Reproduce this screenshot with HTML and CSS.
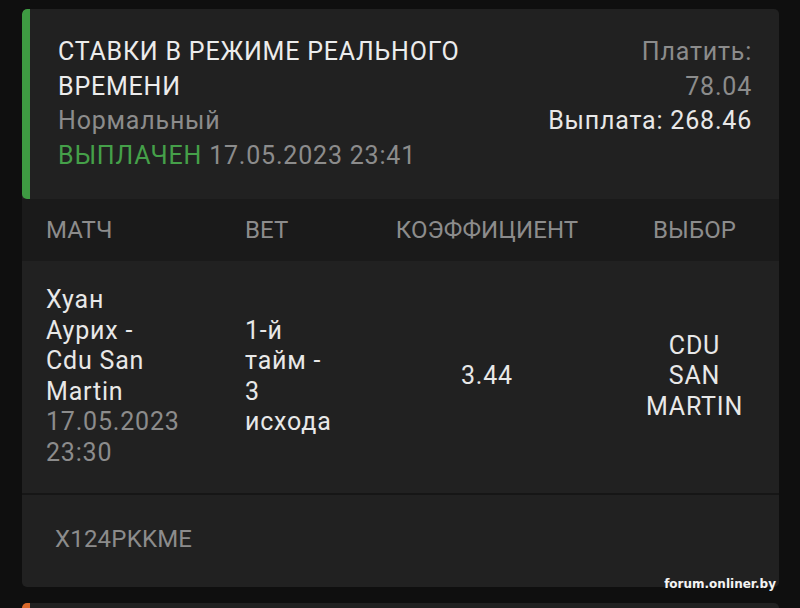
FILE: index.html
```html
<!DOCTYPE html>
<html lang="ru">
<head>
<meta charset="utf-8">
<title>Ставка</title>
<link rel="stylesheet" href="styles.css">
</head>
<body>

<div class="ticket">
  <section class="summary">
    <div class="summary-info">
      <div class="title">СТАВКИ В РЕЖИМЕ РЕАЛЬНОГО ВРЕМЕНИ</div>
      <div class="muted">Нормальный</div>
      <div><span class="paid">ВЫПЛАЧЕН</span> <span class="muted">17.05.2023 23:41</span></div>
    </div>
    <div class="summary-sums">
      <div class="muted">Платить:</div>
      <div class="muted">78.04</div>
      <div>Выплата: 268.46</div>
    </div>
  </section>

  <div class="grid head">
    <div>МАТЧ</div>
    <div>ВЕТ</div>
    <div class="center">КОЭФФИЦИЕНТ</div>
    <div class="center">ВЫБОР</div>
  </div>

  <div class="grid body">
    <div class="match">Хуан Аурих - Cdu San Martin <span class="muted">17.05.2023 23:30</span></div>
    <div class="bet">1-й тайм - 3 исхода</div>
    <div class="center">3.44</div>
    <div class="center"><div class="pick">CDU SAN MARTIN</div></div>
  </div>

  <div class="code">X124PKKME</div>
</div>

<div class="ticket next"></div>

<div class="watermark">forum.onliner.by</div>

</body>
</html>
```

FILE: styles.css
```css
html, body {
  margin: 0;
  padding: 0;
}
body {
  background: #0f0f0f;
  font-family: Roboto, "Noto Sans", sans-serif;
  font-size: 25px;
  letter-spacing: 0.8px;
  color: #e8e8e8;
  height: 608px;
  overflow: hidden;
  position: relative;
}
.ticket {
  margin: 9px 21px 0 22px;
  background: #212121;
  border-radius: 5px;
  overflow: hidden;
}
.ticket.next {
  margin-top: 16px;
  height: 5px;
  border-left: 8px solid #d9682a;
  border-radius: 5px 5px 0 0;
}
.muted {
  color: #8c8c8c;
}
.summary {
  display: flex;
  justify-content: space-between;
  border-left: 8px solid #3e9a42;
  border-radius: 5px 0 0 5px;
  padding: 26px 27px 26px 28px;
  line-height: 34.5px;
}
.summary-info {
  max-width: 470px;
}
.title {
  color: #ececec;
}
.paid {
  color: #45a049;
}
.summary-sums {
  text-align: right;
}
.grid {
  display: grid;
  grid-template-columns: 199px 119px 246px 1fr;
  padding-left: 24px;
}
.center {
  text-align: center;
}
.head {
  background: #1a1a1a;
  color: #8c8c8c;
  font-size: 24px;
  letter-spacing: 0.1px;
  height: 62px;
  align-items: center;
}
.body {
  padding-top: 24px;
  padding-bottom: 25px;
  line-height: 30.5px;
  align-items: center;
  border-bottom: 2px solid #161616;
}
.match {
  max-width: 134px;
}
.bet {
  max-width: 92px;
}
.pick {
  max-width: 100px;
  margin: 0 auto;
}
.code {
  color: #8c8c8c;
  font-size: 24px;
  letter-spacing: 0.2px;
  padding: 31px 33px 34px;
  line-height: 27px;
}
.watermark {
  position: absolute;
  right: 24px;
  top: 577px;
  font-family: "DejaVu Sans", sans-serif;
  font-weight: bold;
  font-size: 12px;
  letter-spacing: 0;
  color: #f4f4f4;
}
```
